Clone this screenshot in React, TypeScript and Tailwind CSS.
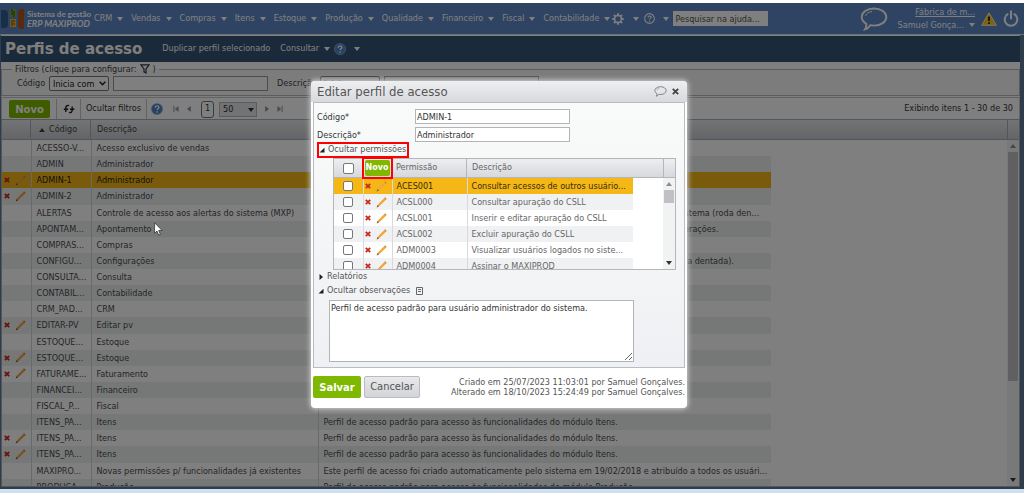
import React from "react"
import clsx from "clsx"

const menus = [
  "CRM",
  "Vendas",
  "Compras",
  "Itens",
  "Estoque",
  "Produção",
  "Qualidade",
  "Financeiro",
  "Fiscal",
  "Contabilidade",
]

const moduleText = "Perfil de acesso padrão para acesso às funcionalidades do módulo "

const profiles = [
  { code: "ACESSO-V...", name: "Acesso exclusivo de vendas" },
  { code: "ADMIN", name: "Administrador" },
  { code: "ADMIN-1", name: "Administrador", editable: true, selected: true },
  { code: "ADMIN-2", name: "Administrador", editable: true },
  {
    code: "ALERTAS",
    name: "Controle de acesso aos alertas do sistema (MXP)",
    note: "Perfil de acesso padrão para controle de todos os alertas que são gerados pelo próprio sistema (roda den...",
  },
  {
    code: "APONTAM...",
    name: "Apontamento",
    note: "Perfil de acesso padrão para acesso total às telas de produção e de apontamento das operações.",
  },
  { code: "COMPRAS...", name: "Compras" },
  {
    code: "CONFIGU...",
    name: "Configurações",
    note: "Perfil de acesso padrão para acesso às configurações gerais e fiscais do sistema ERP (roda dentada).",
  },
  { code: "CONSULTA...", name: "Consulta" },
  { code: "CONTABIL...", name: "Contabilidade" },
  { code: "CRM_PAD...", name: "CRM" },
  { code: "EDITAR-PV", name: "Editar pv", editable: true },
  { code: "ESTOQUE...", name: "Estoque" },
  { code: "ESTOQUE...", name: "Estoque", editable: true },
  { code: "FATURAME...", name: "Faturamento", editable: true },
  { code: "FINANCEI...", name: "Financeiro" },
  { code: "FISCAL_P...", name: "Fiscal" },
  { code: "ITENS_PA...", name: "Itens", note: moduleText + "Itens." },
  { code: "ITENS_PA...", name: "Itens", editable: true, note: moduleText + "Itens." },
  { code: "ITENS_PA...", name: "Itens", editable: true, note: moduleText + "Itens." },
  {
    code: "MAXIPRO...",
    name: "Novas permissões p/ funcionalidades já existentes",
    note: "Este perfil de acesso foi criado automaticamente pelo sistema em 19/02/2018 e atribuído a todos os usuári...",
  },
  { code: "PRODUCA...", name: "Produção", note: moduleText + "Produção." },
]

const permissions = [
  { code: "ACES001", name: "Consultar acessos de outros usuário...", selected: true },
  { code: "ACSL000", name: "Consultar apuração do CSLL" },
  { code: "ACSL001", name: "Inserir e editar apuração do CSLL" },
  { code: "ACSL002", name: "Excluir apuração do CSLL" },
  { code: "ADM0003", name: "Visualizar usuários logados no siste..." },
  { code: "ADM0004", name: "Assinar o MAXIPROD" },
]

function Caret({ className = "" }: { className?: string }) {
  return (
    <svg viewBox="0 0 6 4" className={clsx("w-[6px] h-[4px] shrink-0", className)} fill="currentColor">
      <path d="M0 0h6L3 4z" />
    </svg>
  )
}

function Pencil() {
  return (
    <svg viewBox="0 0 11 11" className="w-[11px] h-[11px]">
      <path d="M1.2 9.8l1-2.6L8.6.8l1.6 1.6L3.8 8.8z" fill="#f0a63c" />
      <path d="M.6 10.4l1-2.4 1.4 1.4z" fill="#6b5a45" />
      <path d="M8.3 1.1l.8-.8 1.6 1.6-.8.8z" fill="#d9822b" />
    </svg>
  )
}

function Cross() {
  return (
    <svg viewBox="0 0 6 6" className="w-[6px] h-[6px]">
      <path d="M.8.8l4.4 4.4M5.2.8L.8 5.2" stroke="#cf2a22" strokeWidth="1.9" />
    </svg>
  )
}

function RowActions() {
  return (
    <div className="flex items-center gap-[5px]">
      <button aria-label="Excluir"><Cross /></button>
      <button aria-label="Editar"><Pencil /></button>
    </div>
  )
}

function HelpBadge() {
  return (
    <svg viewBox="0 0 12 12" className="w-[12px] h-[12px] shrink-0">
      <circle cx="6" cy="6" r="5.6" fill="#4f86c6" stroke="#9dbde3" strokeWidth=".6" />
      <path d="M4.2 4.7c0-2.4 3.7-2.3 3.7-.2 0 1.3-1.8 1.3-1.8 2.6M6.1 8.3v1.4" fill="none" stroke="#fff" strokeWidth="1.3" />
    </svg>
  )
}

function Balloon({ className = "" }: { className?: string }) {
  return (
    <svg viewBox="0 0 28 24" className={className} fill="none" stroke="currentColor">
      <path
        d="M14 1.5c7 0 12.3 3.8 12.3 8.6S21 18.6 14 18.6c-1.3 0-2.5-.1-3.7-.4-1.2 2-3.2 3.5-5.3 4.2 1-1.7 1.5-3.6 1.3-5.6C3.5 15.2 1.7 12.8 1.7 10.1 1.7 5.3 7 1.5 14 1.5z"
        strokeWidth="1.9"
      />
      <path d="M5.5 9c.8-2.6 3.5-4.2 6.5-4.5" strokeWidth="1" />
    </svg>
  )
}

function PageArrow({ flip = false, end = false, label }: { flip?: boolean; end?: boolean; label: string }) {
  return (
    <button aria-label={label} className="text-[#8a94a6]">
      <svg viewBox="0 0 6 6" className={clsx("w-[6px] h-[6px]", flip && "rotate-180")} fill="currentColor">
        <path d={end ? "M5.5 0v6L1.8 3zM.4 0h1v6h-1z" : "M4.8 0v6L1 3z"} />
      </svg>
    </button>
  )
}

function FilterSelect({ id }: { id: string }) {
  return (
    <div className="relative flex">
      <select id={id} className="appearance-none w-[60px] h-[15px] pl-[3px] bg-white border border-[#777] rounded-xs text-[9px] leading-[12px] text-[#222]">
        <option>Inicia com</option>
      </select>
      <svg viewBox="0 0 7 5" className="absolute right-[3px] top-[5px] w-[7px] h-[5px] pointer-events-none" fill="none" stroke="#222" strokeWidth="1.6">
        <path d="M.7.8l2.8 2.9L6.3.8" />
      </svg>
    </div>
  )
}

function ScrollTrack({ thumb }: { thumb: string }) {
  return (
    <div className="w-[12px] shrink-0 bg-[#f1f3f3] flex flex-col items-center px-px text-[#333]">
      <div className="h-[12px] flex items-center text-[#8c8c94]">
        <Caret className="rotate-180" />
      </div>
      <div className={clsx("w-full bg-[#c1c1c5]", thumb)} />
      <div className="mt-auto h-[13px] flex items-center">
        <Caret />
      </div>
    </div>
  )
}

function NavBar() {
  return (
    <nav className="h-[32px] shrink-0 bg-[#5e88c4] border-b border-[#dfe6f0] flex items-center pl-[1px] pr-[5px] text-white">
      <svg viewBox="0 0 24 20" className="w-[24px] h-[20px] shrink-0">
        <path d="M0 1h5l2 2v14l-2 2H0z" fill="#2e6191" />
        <path d="M9 0h6v8H9z" fill="#7da83a" />
        <path d="M11 0v6M13 2v6" stroke="#33482a" strokeWidth="1" />
        <rect x="9" y="10" width="6" height="8" fill="#e8b13a" />
        <path d="M10 12h4M10 14h2M13 14v2M10 16h2" stroke="#7a4a10" strokeWidth="1" />
        <path d="M17 2l2-2h4v20h-4l-2-2z" fill="#b5541e" />
      </svg>
      <div className="ml-[2px] w-[67px] shrink-0 whitespace-nowrap font-['Lato',sans-serif] font-bold leading-[10px]">
        <div className="text-[8px]">Sistema de gestão</div>
        <div className="text-[9px] italic">ERP MAXIPROD</div>
      </div>
      <ul className="flex items-center gap-[8px]">
        {menus.map((m) => (
          <li key={m}>
            <button className="flex items-center gap-[5px]">
              {m}
              <Caret />
            </button>
          </li>
        ))}
      </ul>
      <button aria-label="Configurações" className="ml-[2px] flex items-center gap-[9px]">
        <svg viewBox="0 0 12 12" className="w-[12px] h-[12px]" fill="none" stroke="currentColor">
          <circle cx="6" cy="6" r="3.4" strokeWidth="1.5" />
          <path d="M6 .3v2M6 9.7v2M.3 6h2M9.7 6h2M2 2l1.4 1.4M8.6 8.6L10 10M10 2L8.6 3.4M3.4 8.6L2 10" strokeWidth="2" />
        </svg>
        <Caret />
      </button>
      <button aria-label="Ajuda" className="ml-[5px] flex items-center gap-[8px]">
        <svg viewBox="0 0 12 12" className="w-[11px] h-[11px]" fill="none" stroke="currentColor">
          <circle cx="6" cy="6" r="5.3" strokeWidth="1.2" />
          <path d="M4.3 4.9c0-2.2 3.5-2.2 3.5-.2 0 1.2-1.8 1.2-1.8 2.4M6 8.2v1.3" strokeWidth="1.2" />
        </svg>
        <Caret />
      </button>
      <input
        aria-label="Pesquisar na ajuda"
        placeholder="Pesquisar na ajuda..."
        className="ml-[4px] w-[95px] h-[15px] bg-white px-[2px] placeholder:text-[#555]"
      />
      <div className="ml-auto flex items-center">
        <button aria-label="Mensagens">
          <Balloon className="w-[28px] h-[24px]" />
        </button>
        <div className="ml-[10px] leading-[13px] whitespace-nowrap text-right">
          <a href="#fabrica" className="block underline">Fábrica de m...</a>
          <button className="flex items-center gap-[5px] leading-[13px]">
            Samuel Gonça...
            <Caret />
          </button>
        </div>
        <button aria-label="Avisos" className="ml-[6px]">
          <svg viewBox="0 0 16 14" className="w-[16px] h-[14px]">
            <path d="M8 .8L15.4 13.3H.6z" fill="#f7c623" stroke="#fff2b8" strokeWidth="1" />
            <path d="M8 4.500v4.500M8 10.200v1.800" stroke="#222" strokeWidth="1.8" />
          </svg>
        </button>
        <button aria-label="Sair" className="ml-[6px]">
          <svg viewBox="0 0 16 18" className="w-[16px] h-[18px]" fill="none" stroke="currentColor" strokeWidth="2" strokeLinecap="round">
            <path d="M4.6 4.2a6.3 6.3 0 1 0 6.8 0M8 1.2v7.3" />
          </svg>
        </button>
      </div>
    </nav>
  )
}

function TitleBar() {
  return (
    <header className="mt-px h-[26px] shrink-0 bg-[#365474] flex items-center pl-[4px] text-white">
      <h1 className="text-[15px] font-bold font-['DejaVu_Sans',sans-serif]">Perfis de acesso</h1>
      <button className="ml-[20px]">Duplicar perfil selecionado</button>
      <button className="ml-[10px] flex items-center gap-[5px]">
        Consultar
        <Caret />
      </button>
      <button aria-label="Ajuda" className="ml-[4px] flex items-center gap-[8px]">
        <HelpBadge />
        <Caret />
      </button>
    </header>
  )
}

function Filters() {
  return (
    <fieldset className="mt-[1px] h-[33px] shrink-0 border border-[#b4b8be] bg-[#f8f9f9] pl-[15px] text-[#444]">
      <legend className="-ml-[5px] px-[3px] leading-[12px]">
        <button className="flex items-center gap-[3px]">
          Filtros (clique para configurar:
          <svg viewBox="0 0 10 10" className="w-[10px] h-[10px]" fill="none" stroke="#2b3a4f" strokeWidth="1.2">
            <path d="M.8.8h8.400L6 5v4L4 7.800V5z" />
          </svg>
          )
        </button>
      </legend>
      <div className="pt-px flex items-center">
        <label htmlFor="f-codigo" className="w-[32px]">Código</label>
        <FilterSelect id="f-codigo" />
        <input aria-label="Valor do código" className="ml-[4px] w-[155px] h-[15px] bg-white border border-[#999]" />
        <label htmlFor="f-descricao" className="ml-[9px] w-[43px]">Descrição</label>
        <FilterSelect id="f-descricao" />
        <input aria-label="Valor da descrição" className="ml-[4px] w-[155px] h-[15px] bg-white border border-[#999]" />
      </div>
    </fieldset>
  )
}

function Toolbar() {
  return (
    <div className="mt-px h-[22px] shrink-0 border border-b-0 border-[#c3c6cb] flex items-center pt-px pl-[7px] pr-[6px] text-[#333]">
      <button className="w-[41px] h-[18px] bg-[#7fb800] text-white text-[10px] font-bold font-['DejaVu_Sans',sans-serif] rounded-xs">Novo</button>
      <div className="ml-[6px] w-px h-full bg-[#c3c6cb]" />
      <button aria-label="Atualizar" className="w-[23px] flex justify-center">
        <svg viewBox="0 0 12 10" className="w-[12px] h-[10px]" fill="none" stroke="#222" strokeWidth="1.4">
          <path d="M6 1.6C4 1 2.8 2 2.8 4v4M.8 5.2h4.400M6 8.4c2 .6 3.2-.4 3.2-2.400V2.500M7 5.200h4.400" />
        </svg>
      </button>
      <div className="w-px h-full bg-[#c3c6cb]" />
      <button className="w-[65px] whitespace-nowrap">Ocultar filtros</button>
      <div className="w-px h-full bg-[#c3c6cb]" />
      <button aria-label="Ajuda" className="ml-[4px]"><HelpBadge /></button>
      <div className="ml-[10px] flex items-center gap-[7px]">
        <PageArrow end label="Primeira página" />
        <PageArrow label="Página anterior" />
        <button className="ml-[2px] w-[13px] h-[17px] border border-[#777] rounded-[3px] bg-white">1</button>
        <div className="relative flex -ml-[2px]">
          <select aria-label="Itens por página" className="appearance-none w-[38px] h-[15px] pl-[3px] bg-[#e4e6e9] border border-[#b5b8bd]">
            <option>50</option>
          </select>
          <Caret className="absolute right-[3px] top-[6px] pointer-events-none text-[#333]" />
        </div>
        <PageArrow flip label="Próxima página" />
        <PageArrow flip end label="Última página" />
      </div>
      <span className="ml-auto">Exibindo itens 1 - 30 de 30</span>
    </div>
  )
}

function ProfileGrid() {
  return (
    <div className="flex-1 min-h-0 flex flex-col border border-[#a9adb4]">
      <div className="h-[20px] shrink-0 flex bg-linear-to-b from-[#e6e8ea] to-[#c8cad0] border-b border-[#a9adb4] text-[#444]">
        <div className="w-[29px] border-r border-[#a9adb4]" />
        <div className="w-[60px] border-r border-[#a9adb4] flex items-center gap-[4px] pl-[8px]">
          <Caret className="rotate-180" />
          Código
        </div>
        <div className="flex-1 flex items-center pl-[6px]">Descrição</div>
        <div className="w-[12px] border-l border-[#a9adb4]" />
      </div>
      <div className="flex-1 min-h-0 flex justify-between overflow-hidden">
        <div className="w-[769px] overflow-hidden">
          <table className="w-full h-[355px] table-fixed border-collapse whitespace-nowrap text-[#4a4a50]">
            <colgroup>
              <col className="w-[29px]" />
              <col className="w-[60px]" />
              <col className="w-[227px]" />
              <col />
            </colgroup>
            <tbody>
              {profiles.map((p, i) => (
                <tr
                  key={i}
                  className={clsx(
                    "h-[16px] leading-[12px]",
                    p.selected ? "bg-[#f5b716] text-[#2b2410]" : i % 2 === 1 ? "bg-[#edf1f0]" : "bg-white"
                  )}
                >
                  <td className="p-0 pl-[2px] border-r border-[#d0d3d8]">{p.editable && <RowActions />}</td>
                  <td className="p-0 pl-[5px] border-r border-[#d0d3d8]">{p.code}</td>
                  <td className="p-0 pl-[5px] border-r border-[#d0d3d8]">{p.name}</td>
                  <td className="p-0 pl-[5px]">{p.note}</td>
                </tr>
              ))}
            </tbody>
          </table>
        </div>
        <ScrollTrack thumb="h-[229px]" />
      </div>
    </div>
  )
}

function PermissionGrid() {
  return (
    <div className="ml-[19px] mr-[8px] h-[112px] border border-[#b3b6bb] flex flex-col text-[#666]">
      <div className="h-[19px] shrink-0 flex items-center bg-linear-to-b from-[#eceef0] to-[#d6d8dc] border-b border-[#b3b6bb]">
        <div className="w-[29px] h-full border-r border-[#b3b6bb] flex items-center justify-center">
          <input type="checkbox" aria-label="Selecionar todas" className="appearance-none w-[11px] h-[11px] bg-white border border-[#777] rounded-xs" />
        </div>
        <div className="w-[29px] h-full border-r border-[#b3b6bb] flex items-center justify-center">
          <div className="relative shrink-0 w-[31px] h-[22px] border-2 border-[#f00] flex items-center justify-center">
            <button className="w-[25px] h-[16px] shrink-0 bg-[#7fb800] text-white text-[8px] font-bold font-['DejaVu_Sans',sans-serif] rounded-xs">
              Novo
            </button>
          </div>
        </div>
        <div className="w-[74px] pl-[4px]">Permissão</div>
        <div className="flex-1 h-full border-l border-[#b3b6bb] flex items-center pl-[5px]">Descrição</div>
        <div className="w-[12px] h-full border-l border-[#b3b6bb]" />
      </div>
      <div className="flex-1 min-h-0 flex justify-between bg-white overflow-hidden">
        <div className="w-[299px] overflow-hidden">
          <table className="w-full table-fixed border-collapse whitespace-nowrap">
            <colgroup>
              <col className="w-[29px]" />
              <col className="w-[29px]" />
              <col className="w-[75px]" />
              <col />
            </colgroup>
            <tbody>
              {permissions.map((p, i) => (
                <tr
                  key={p.code}
                  className={clsx(
                    "h-[16px] leading-[12px]",
                    p.selected ? "bg-[#f5b716] text-[#332b12]" : i % 2 === 1 ? "bg-[#f0f1f3]" : "bg-white"
                  )}
                >
                  <td className="p-0 border-r border-[#d8dadd]">
                    <input
                      type="checkbox"
                      aria-label={p.code}
                      className="block mx-auto appearance-none w-[10px] h-[10px] bg-white border border-[#777] rounded-xs"
                    />
                  </td>
                  <td className="p-0 pl-[1px] border-r border-[#d8dadd]"><RowActions /></td>
                  <td className="p-0 pl-[4px] border-r border-[#d8dadd]">{p.code}</td>
                  <td className="p-0 pl-[4px]">{p.name}</td>
                </tr>
              ))}
            </tbody>
          </table>
        </div>
        <ScrollTrack thumb="h-[13px]" />
      </div>
    </div>
  )
}

function SectionToggle({ open = false, children }: { open?: boolean; children: React.ReactNode }) {
  return (
    <button className="flex items-center gap-[3px]">
      <svg viewBox="0 0 6 6" className="w-[6px] h-[6px]" fill="#222">
        <path d={open ? "M5.500.8v4.700H.5z" : "M1.500 0l3.500 3-3.500 3z"} />
      </svg>
      {children}
    </button>
  )
}

function EditDialog() {
  return (
    <div
      role="dialog"
      aria-labelledby="dialog-title"
      className="absolute left-[311px] top-[78px] w-[376px] bg-white rounded-[4px] overflow-hidden shadow-[0_0_5px_1px_#d0d0d0] text-[#555]"
    >
      <div className="h-[21px] bg-linear-to-b from-[#eeeff1] to-[#d8d9dd] flex items-center pl-[6px] pr-[8px]">
        <h2 id="dialog-title" className="text-[13px] text-[#555]">Editar perfil de acesso</h2>
        <button aria-label="Comentários" className="ml-auto text-[#777]">
          <Balloon className="w-[13px] h-[11px]" />
        </button>
        <button aria-label="Fechar" className="ml-[5px]">
          <svg viewBox="0 0 7 7" className="w-[7px] h-[7px]" stroke="#444" strokeWidth="1.8">
            <path d="M.8.8l5.400 5.400M6.200.8L.8 6.200" />
          </svg>
        </button>
      </div>

      <div className="mx-[2px] h-[266px] border border-[#b9bcc4] bg-linear-to-b from-[#f9fbfa] to-[#eff0f3] pt-[6px]">
        <div className="flex items-center pl-[3px] h-[15px]">
          <label htmlFor="codigo" className="w-[98px] pt-[3px] text-[#333]">Código*</label>
          <input id="codigo" defaultValue="ADMIN-1" className="w-[155px] h-[15px] bg-white border border-[#b3b3b8] px-px text-[#333]" />
        </div>
        <div className="mt-[3px] flex items-center pl-[3px] h-[15px]">
          <label htmlFor="descricao" className="w-[98px] pt-[3px] text-[#333]">Descrição*</label>
          <input id="descricao" defaultValue="Administrador" className="w-[155px] h-[15px] bg-white border border-[#b3b3b8] px-px text-[#333]" />
        </div>
        <div className="ml-[3px] w-[92px] h-[16px] border-2 border-[#f00] flex items-center whitespace-nowrap">
          <SectionToggle open>Ocultar permissões</SectionToggle>
        </div>
        <PermissionGrid />
        <div className="pl-[4px] h-[14px] flex items-center">
          <SectionToggle>Relatórios</SectionToggle>
        </div>
        <div className="pl-[4px] h-[14px] flex items-center">
          <SectionToggle open>
            Ocultar observações
            <svg viewBox="0 0 7 8" className="ml-[3px] w-[7px] h-[8px]" fill="none" stroke="#666" strokeWidth="1">
              <path d="M.5.5h6v7h-6zM2 2.500h3M2 4.500h3" />
            </svg>
          </SectionToggle>
        </div>
        <textarea
          aria-label="Observações"
          defaultValue="Perfil de acesso padrão para usuário administrador do sistema."
          className="block mt-[2px] ml-[15px] w-[305px] h-[62px] bg-white border border-[#b3b3b8] px-px py-[2px] leading-[11px] text-[#333] resize"
        />
      </div>

      <div className="mt-[8px] mb-[10px] px-[2px] flex items-center">
        <button className="w-[48px] h-[22px] bg-[#7fb800] text-white text-[10px] font-bold font-['DejaVu_Sans',sans-serif] rounded-xs">Salvar</button>
        <button className="ml-[3px] w-[56px] h-[22px] bg-linear-to-b from-[#e9e9eb] to-[#d3d4d8] border border-[#b9bbc0] text-[11px] rounded-xs">Cancelar</button>
        <p className="ml-auto text-right leading-[10px]">
          Criado em 25/07/2023 11:03:01 por Samuel Gonçalves.
          <br />
          Alterado em 18/10/2023 15:24:49 por Samuel Gonçalves.
        </p>
      </div>
    </div>
  )
}

export default function App() {
  return (
    <div className="relative h-screen flex flex-col overflow-hidden bg-white pt-[3px] text-[9px] font-['DejaVu_Sans_Condensed','DejaVu_Sans',sans-serif]">
      <div className="relative flex-1 min-h-0 flex flex-col bg-[#5e7896]">
        <NavBar />
        <main className="flex-1 min-h-0 flex flex-col mx-[1px] mr-[4px] mb-[2px] bg-white">
          <TitleBar />
          <Filters />
          <Toolbar />
          <ProfileGrid />
        </main>
        <div className="absolute inset-0 bg-black/50" />
        <EditDialog />
        <svg viewBox="0 0 9 14" className="absolute left-[154px] top-[219px] w-[9px] h-[14px]">
          <path d="M.6.8v10.400l2.400-2.100 1.700 4 1.700-.8-1.700-3.800h3.400z" fill="#fff" stroke="#222" strokeWidth=".7" />
        </svg>
      </div>
      <div className="h-[4px] shrink-0 bg-[#cfdff2]" />
    </div>
  )
}
